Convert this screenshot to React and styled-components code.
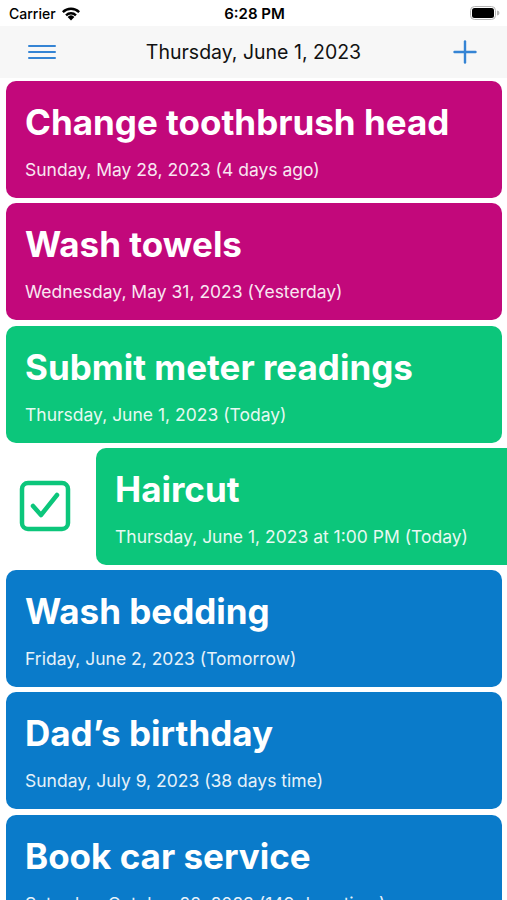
import React from 'react';
import styled, { createGlobalStyle } from 'styled-components';

const GlobalStyle = createGlobalStyle`
	html, body {
		margin: 0;
		padding: 0;
		background: #ffffff;
		font-family: Inter, "Noto Sans", sans-serif;
	}
`;

const colors = {
	overdue: '#c2087b',
	today: '#0cc67b',
	future: '#0a7bca',
};

const reminders = [
	{ title: 'Change toothbrush head', date: 'Sunday, May 28, 2023 (4 days ago)', kind: 'overdue' },
	{ title: 'Wash towels', date: 'Wednesday, May 31, 2023 (Yesterday)', kind: 'overdue' },
	{ title: 'Submit meter readings', date: 'Thursday, June 1, 2023 (Today)', kind: 'today' },
	{ title: 'Haircut', date: 'Thursday, June 1, 2023 at 1:00 PM (Today)', kind: 'today', swiped: true },
	{ title: 'Wash bedding', date: 'Friday, June 2, 2023 (Tomorrow)', kind: 'future' },
	{ title: 'Dad\u2019s birthday', date: 'Sunday, July 9, 2023 (38 days time)', kind: 'future' },
	{ title: 'Book car service', date: 'Saturday, October 28, 2023 (149 days time)', kind: 'future' },
];

const WifiIcon = () => (
	<svg width="20" height="15" viewBox="0 0 20 15">
		<path d="M10 14.5 L6.6 10.9 A5 5 0 0 1 13.4 10.9 Z" fill="#000" />
		<path d="M4.2 8.4 A8.4 8.4 0 0 1 15.8 8.4 L14.1 10.2 A6 6 0 0 0 5.9 10.2 Z" fill="#000" />
		<path d="M1 5.3 A12.8 12.8 0 0 1 19 5.3 L17.3 7.1 A10.4 10.4 0 0 0 2.7 7.1 Z" fill="#000" />
	</svg>
);

const BatteryIcon = () => (
	<svg width="30" height="14" viewBox="0 0 30 14">
		<rect x="0.5" y="0.5" width="25" height="13" rx="4" fill="none" stroke="#b5b5b5" />
		<rect x="2" y="2" width="22" height="10" rx="2.5" fill="#000" />
		<path d="M27 4.5 A2.5 2.5 0 0 1 27 9.5 Z" fill="#b5b5b5" />
	</svg>
);

const MenuIcon = () => (
	<svg width="28" height="16" viewBox="0 0 28 16">
		<g stroke="#3584d4" strokeWidth="2" strokeLinecap="round">
			<line x1="1" y1="2" x2="27" y2="2" />
			<line x1="1" y1="8" x2="27" y2="8" />
			<line x1="1" y1="14" x2="27" y2="14" />
		</g>
	</svg>
);

const PlusIcon = () => (
	<svg width="24" height="24" viewBox="0 0 24 24">
		<g stroke="#3584d4" strokeWidth="2.4" strokeLinecap="round">
			<line x1="12" y1="1.5" x2="12" y2="22.5" />
			<line x1="1.5" y1="12" x2="22.5" y2="12" />
		</g>
	</svg>
);

const CheckIcon = () => (
	<svg width="52" height="52" viewBox="0 0 52 52">
		<rect x="3" y="3" width="46" height="46" rx="6" fill="none" stroke="#0cc67b" strokeWidth="4.5" />
		<path d="M14 26 L22 35 L38 15" fill="none" stroke="#0cc67b" strokeWidth="4.5" strokeLinecap="round" strokeLinejoin="round" />
	</svg>
);

export default function App() {
	return (
		<Screen>
			<GlobalStyle />
			<StatusBar>
				<Carrier>
					Carrier <WifiIcon />
				</Carrier>
				<Clock>6:28 PM</Clock>
				<Battery>
					<BatteryIcon />
				</Battery>
			</StatusBar>
			<NavBar>
				<NavButton>
					<MenuIcon />
				</NavButton>
				<NavTitle>Thursday, June 1, 2023</NavTitle>
				<NavButton>
					<PlusIcon />
				</NavButton>
			</NavBar>
			<List>
				{reminders.map((r) =>
					r.swiped ? (
						<SwipeRow key={r.title}>
							<DoneAction>
								<CheckIcon />
							</DoneAction>
							<Card color={colors[r.kind]}>
								<Title>{r.title}</Title>
								<DateLine>{r.date}</DateLine>
							</Card>
						</SwipeRow>
					) : (
						<Card key={r.title} color={colors[r.kind]}>
							<Title>{r.title}</Title>
							<DateLine>{r.date}</DateLine>
						</Card>
					)
				)}
			</List>
		</Screen>
	);
}

const Screen = styled.div`
	width: 507px;
	height: 900px;
	overflow: hidden;
	background: #ffffff;
`;

const StatusBar = styled.div`
	height: 26px;
	display: grid;
	grid-template-columns: 1fr auto 1fr;
	align-items: center;
	padding: 0 7px 0 9px;
	font-size: 15px;
	color: #000;
`;

const Carrier = styled.div`
	display: flex;
	align-items: center;
	gap: 5px;
	font-weight: 500;
	font-size: 14px;
`;

const Clock = styled.div`
	font-weight: 600;
	font-size: 15px;
`;

const Battery = styled.div`
	display: flex;
	justify-content: flex-end;
`;

const NavBar = styled.div`
	height: 52px;
	background: #f7f7f7;
	display: flex;
	align-items: center;
	justify-content: space-between;
	padding: 0 28px;
`;

const NavButton = styled.div`
	display: flex;
	align-items: center;
	justify-content: center;
	width: 28px;
`;

const NavTitle = styled.div`
	font-size: 19.5px;
	color: #111;
`;

const List = styled.div`
	display: flex;
	flex-direction: column;
	gap: 5.3px;
	padding: 3px 5px 0 6px;
	overflow: hidden;
`;

const Card = styled.div`
	flex-shrink: 0;
	box-sizing: border-box;
	width: 496px;
	height: 117px;
	border-radius: 10px;
	background: ${(p) => p.color};
	color: #fff;
	padding: 20px 19px 0;
	display: flex;
	flex-direction: column;
	gap: 16px;
`;

const SwipeRow = styled.div`
	display: flex;
	align-items: stretch;
	margin-right: -100px;
`;

const DoneAction = styled.div`
	width: 90px;
	flex-shrink: 0;
	display: flex;
	align-items: center;
	padding-left: 13px;
	box-sizing: border-box;
`;

const Title = styled.div`
	font-size: 35px;
	font-weight: 700;
	line-height: 42px;
	white-space: nowrap;
`;

const DateLine = styled.div`
	font-size: 17.5px;
	line-height: 22px;
	opacity: 0.9;
	white-space: nowrap;
`;
